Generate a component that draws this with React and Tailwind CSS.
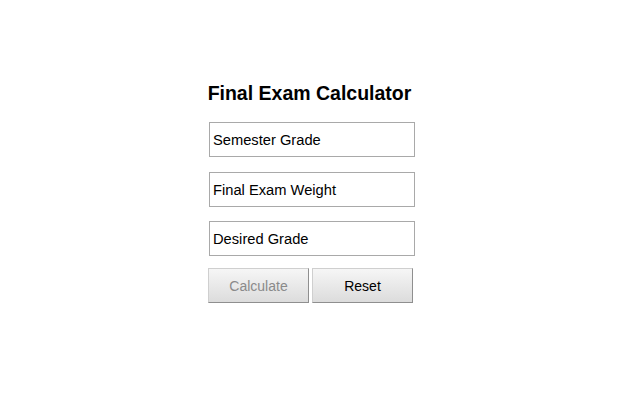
import React from "react";

export default function App() {
  const font = { fontFamily: '"Liberation Sans", Arial, sans-serif' };
  return (
    <div className="w-[640px] h-[400px] bg-white" style={font}>
      <div className="pt-[80px] pl-[207px] flex flex-col w-[420px]">
        <div className="w-[205px] text-center text-[19.5px] font-bold text-black leading-[26px]">
          Final Exam Calculator
        </div>
        <div className="mt-[16px] ml-[2px] flex flex-col gap-[14.5px]">
          {["Semester Grade", "Final Exam Weight", "Desired Grade"].map((t) => (
            <div
              key={t}
              className="w-[206px] h-[35px] border border-[#a9a9a9] bg-white flex items-center pl-[3px] pt-[2px] text-[14.7px] text-black"
            >
              {t}
            </div>
          ))}
        </div>
        <div className="mt-[12px] ml-[1px] flex gap-[3px]">
          <div className="w-[101px] h-[35px] flex items-center justify-center pt-[2px] text-[14px] text-[#8a8a8a] bg-gradient-to-b from-[#f6f6f6] to-[#dcdcdc] border border-t-[#cfcfcf] border-l-[#cfcfcf] border-r-[#8f8f8f] border-b-[#8f8f8f]">
            Calculate
          </div>
          <div className="w-[101px] h-[35px] flex items-center justify-center pt-[2px] text-[14px] text-black bg-gradient-to-b from-[#f6f6f6] to-[#dcdcdc] border border-t-[#cfcfcf] border-l-[#cfcfcf] border-r-[#8f8f8f] border-b-[#8f8f8f]">
            Reset
          </div>
        </div>
      </div>
    </div>
  );
}
